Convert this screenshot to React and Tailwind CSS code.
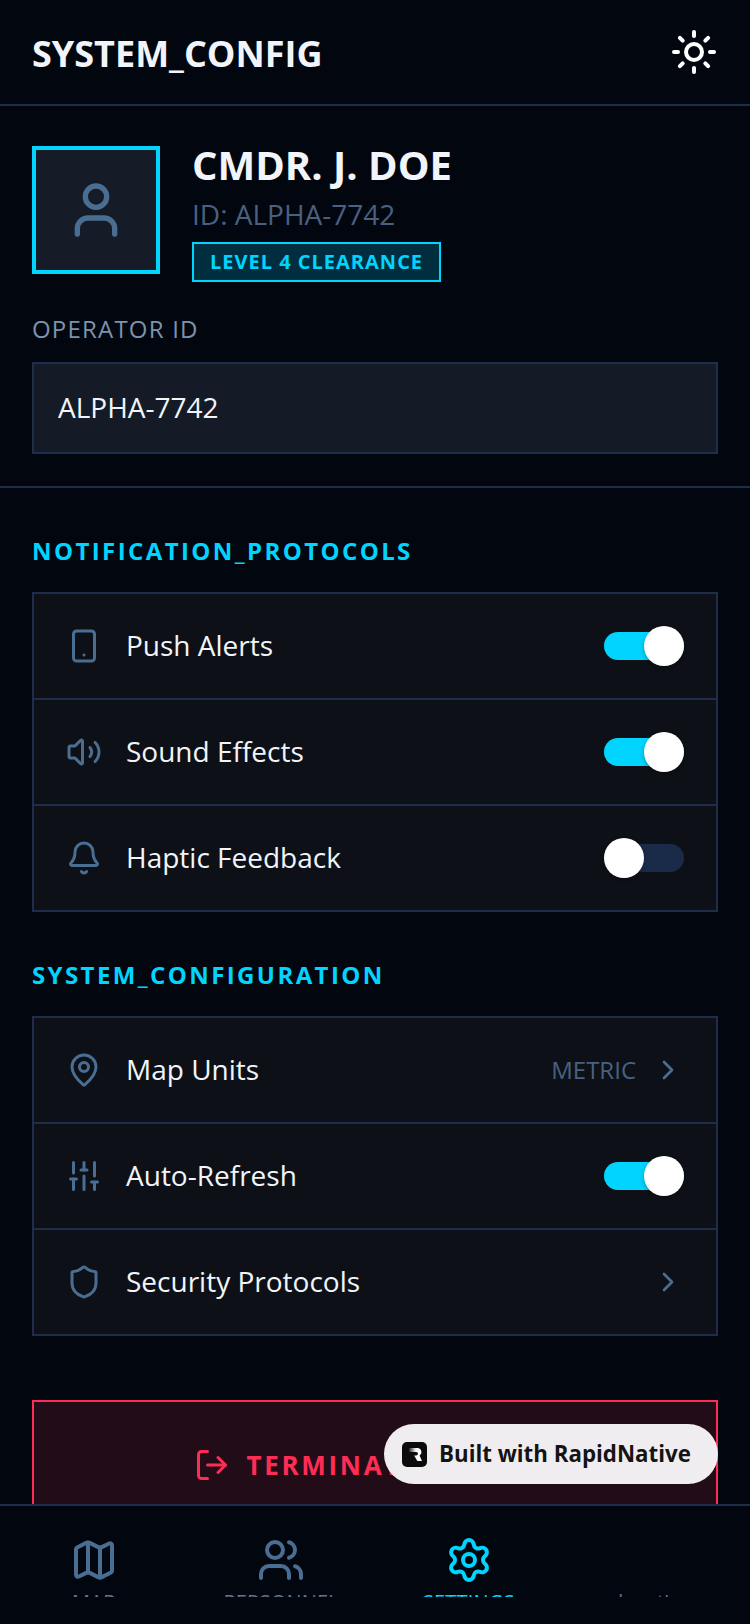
import { Sun, User, Smartphone, Volume2, Bell, MapPin, SlidersVertical, Shield, ChevronRight, LogOut, Map, Users, Settings } from 'lucide-react'

function Toggle({ on }) {
  return (
    <div className={`relative w-20 h-7 rounded-full ${on ? 'bg-[#00d4ff]' : 'bg-[#1a2b4a]'}`}>
      <div className={`absolute -top-1.5 w-10 h-10 rounded-full bg-white shadow-[0_2px_4px_rgba(0,0,0,0.3)] ${on ? 'right-0' : 'left-0'}`} />
    </div>
  )
}

function Row({ icon: Icon, label, children }) {
  return (
    <div className="p-8">
      <div className="flex items-center h-10">
        <Icon size={36} strokeWidth={2} className="shrink-0 text-[#4a6d92] mr-6" />
        <span className="flex-1 pb-0.5 text-[28px] leading-10 text-[#f1f5f9]">{label}</span>
        {children}
      </div>
    </div>
  )
}

function Section({ title, children }) {
  return (
    <section className="px-8 pt-[47px]">
      <h2 className="mb-[25px] text-2xl leading-8 font-bold tracking-[2.4px] text-[#00d4ff]">{title}</h2>
      <div className="border-2 border-[#1e2d4a] bg-[#0d1117] divide-y-2 divide-[#1e2d4a]">{children}</div>
    </section>
  )
}

function Chevron() {
  return <ChevronRight size={32} className="text-[#4a6d92]" />
}

function Tab({ icon: Icon, label, active }) {
  return (
    <div className="flex-1 flex flex-col items-center">
      {Icon ? (
        <Icon size={48} strokeWidth={2} className={`shrink-0 ${active ? 'text-[#00d4ff]' : 'text-[#4a6d92]'}`} />
      ) : (
        <div className="shrink-0 h-12" />
      )}
      <span className={`shrink-0 mt-1 text-xl leading-7 tracking-[0.2px] ${active ? 'text-[#00d4ff]' : 'text-[#64748b]'}`}>{label}</span>
    </div>
  )
}

export default function App() {
  return (
    <div className="relative flex flex-col h-[1624px] overflow-hidden bg-[#02060f] font-['Open_Sans',sans-serif]">
      {/* Header */}
      <header className="flex items-center justify-between py-7 px-8 border-b-2 border-[#1e2d4a]">
        <h1 className="pt-0.5 -mb-0.5 text-4xl leading-12 font-bold text-[#f1f5f9]">SYSTEM_CONFIG</h1>
        <Sun size={48} strokeWidth={2} className="text-white" />
      </header>

      <main className="flex-1 overflow-hidden">
        {/* Profile */}
        <section className="px-8 pt-8 pb-8 border-b-2 border-[#1e2d4a]">
          <div className="flex items-center gap-8">
            <div className="flex items-center justify-center w-32 h-32 border-4 border-[#00d4ff] bg-[#151c27]">
              <User size={64} strokeWidth={2} className="text-[#4a6d92]" />
            </div>
            <div className="flex flex-col items-start">
              <p className="-mt-px mb-px text-[40px] leading-14 font-bold text-[#f1f5f9]">CMDR. J. DOE</p>
              <p className="text-[28px] leading-10 text-[#4a6080]">ID: ALPHA-7742</p>
              <span className="mt-2 px-4 py-1 border-2 border-[#00d4ff] bg-[#00d4ff]/20 text-xl leading-7 font-bold tracking-[1px] text-[#00d4ff]">
                LEVEL 4 CLEARANCE
              </span>
            </div>
          </div>
          <p className="mt-[31px] mb-[17px] text-2xl leading-8 tracking-[1.2px] text-[#7c93ad]">OPERATOR ID</p>
          <div className="px-6 pt-[23px] pb-[25px] border-2 border-[#1e2d4a] bg-[#141b26] text-[28px] leading-10 text-[#f1f5f9]">ALPHA-7742</div>
        </section>

        <Section title="NOTIFICATION_PROTOCOLS">
          <Row icon={Smartphone} label="Push Alerts"><Toggle on /></Row>
          <Row icon={Volume2} label="Sound Effects"><Toggle on /></Row>
          <Row icon={Bell} label="Haptic Feedback"><Toggle /></Row>
        </Section>

        <Section title="SYSTEM_CONFIGURATION">
          <Row icon={MapPin} label="Map Units">
            <span className="mr-4 text-2xl text-[#4a6080]">METRIC</span>
            <Chevron />
          </Row>
          <Row icon={SlidersVertical} label="Auto-Refresh"><Toggle on /></Row>
          <Row icon={Shield} label="Security Protocols"><Chevron /></Row>
        </Section>

        {/* Terminate */}
        <div className="px-8 pt-16">
          <button className="flex items-center justify-center gap-4 w-full h-[130px] border-2 border-[#ff2d55] bg-[#220c18] text-[26px] font-bold tracking-[2.7px] text-[#ff2d55]">
            <LogOut size={36} strokeWidth={2} />
            <span>TERMINATE SESSION</span>
          </button>
        </div>
      </main>

      {/* Bottom nav */}
      <nav className="shrink-0 h-[120px] border-t-2 border-[#1e2d4a] bg-[#02060f]">
        <div className="flex h-[91px] pt-[30px] overflow-hidden">
          <Tab icon={Map} label="MAP" />
          <Tab icon={Users} label="PERSONNEL" />
          <Tab icon={Settings} label="SETTINGS" active />
          <Tab label="location" />
        </div>
      </nav>

      {/* Badge */}
      <div className="absolute left-[384px] top-[1424px] flex items-center w-[334px] h-[60px] pl-[18px] rounded-full bg-[#f0edf0]">
        <svg width="25" height="25" viewBox="0 0 25 25" className="mr-3">
          <defs>
            <linearGradient id="rn" x1="0" x2="1" y1="0" y2="0">
              <stop offset="0" stopColor="#222" />
              <stop offset="0.55" stopColor="#fff" />
            </linearGradient>
          </defs>
          <rect width="25" height="25" rx="5" fill="#0b0b0b" />
          <path d="M7 6h8.5a4 4 0 0 1 2 7.4l2.5 5.6h-4.6l-3.4-5.5h2.2a1.7 1.7 0 0 0 0-3.5H7z" fill="url(#rn)" />
        </svg>
        <span className="text-[22.3px] font-bold text-[#141414]">Built with RapidNative</span>
      </div>
    </div>
  )
}
